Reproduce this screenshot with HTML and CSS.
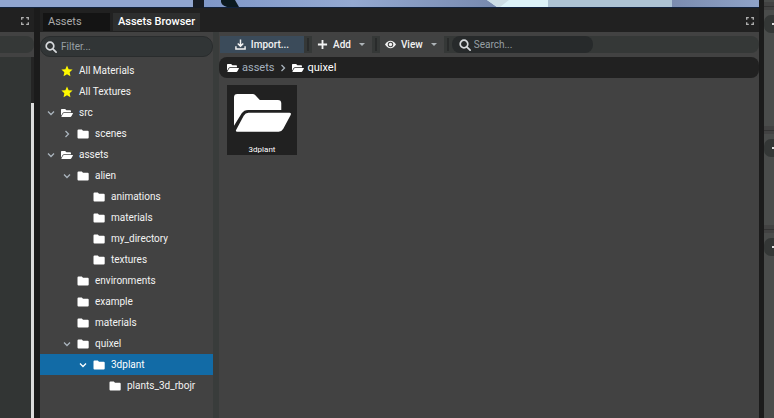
FILE: index.html
```
<!DOCTYPE html>
<html lang="en">
<head>
<meta charset="utf-8">
<title>Assets Browser</title>
<link rel="stylesheet" href="styles.css">
</head>
<body>
<svg class="defs" aria-hidden="true">
  <symbol id="folder" viewBox="0 0 12 10"><path d="M1.500.5h3.300l1.200 1.300h4.700q1 0 1 1v5.700q0 1-1 1H1.500q-1 0-1-1v-7q0-1 1-1z"/></symbol>
  <symbol id="open" viewBox="0 0 170 114"><path d="M10 0h46q4 0 7 3l14 15h54q10 0 10 10v20H42q-12 0-19 10L0 95V10Q0 0 10 0z"/><path d="M43 56h122q7 0 4 7l-22 41q-5 9-14 9H10q-7 0-3-7l22-41q5-9 14-9z"/></symbol>
  <symbol id="star" viewBox="0 0 24 24"><path d="M12 1l3.300 7.300 7.900.9-5.900 5.300 1.600 7.900-6.900-4-6.900 4 1.600-7.900L.8 9.200l7.900-.9z"/></symbol>
  <symbol id="down" viewBox="0 0 8 8"><path class="line" d="M1 2.500l3 3 3-3"/></symbol>
  <symbol id="right" viewBox="0 0 8 8"><path class="line" d="M2.500 1l3 3-3 3"/></symbol>
  <symbol id="search" viewBox="0 0 12 12"><circle class="lens" cx="5" cy="5" r="3.800"/><path class="lens" d="M7.800 7.800l3.300 3.300"/></symbol>
  <symbol id="expand" viewBox="0 0 8 8"><path class="line" d="M.7 2.800V.7h2.100M5.200.7h2.100v2.100M7.300 5.200v2.100H5.200M2.800 7.300H.7V5.200"/></symbol>
</svg>
<div class="editor">
  <div class="workspace">
    <svg class="viewport" viewBox="0 0 759 8" preserveAspectRatio="none" aria-hidden="true">
      <defs>
        <linearGradient id="sky"><stop offset="0" stop-color="#8098c9"/><stop offset=".5" stop-color="#94a9d1"/><stop offset="1" stop-color="#7688ad"/></linearGradient>
        <linearGradient id="haze"><stop offset="0" stop-color="#7b8caf"/><stop offset="1" stop-color="#8fa3c8"/></linearGradient>
      </defs>
      <rect width="759" height="8" fill="#11233f"/>
      <rect width="193" height="7" fill="#91a6d0"/>
      <rect x="193" width="11" height="8" fill="#171c24"/>
      <rect x="204" width="298" height="7" fill="url(#sky)"/>
      <path d="M221 0h14l4 7h-12q-7-2-6-7z" fill="#0c1a20"/>
      <path d="M487 0h61v7h-51z" fill="#dcf2f8"/>
      <path d="M487 0h22l-9 7h-3z" fill="#ccdde5"/>
      <rect x="548" width="124" height="7" fill="#adc3d4"/>
      <rect x="672" width="87" height="7" fill="url(#haze)"/>
    </svg>
    <div class="docks">
      <aside class="left">
        <div class="dock-head"><button class="max" aria-label="Maximize"><svg><use href="#expand"/></svg></button></div>
        <div class="left-bar"></div>
        <div class="left-body"><span class="thumb"></span></div>
      </aside>
      <main class="browser">
        <div class="dock-head" role="tablist">
          <button class="tab inactive" role="tab">Assets</button>
          <button class="tab" role="tab" aria-selected="true">Assets Browser</button>
          <button class="max" aria-label="Maximize"><svg><use href="#expand"/></svg></button>
        </div>
        <div class="panes">
          <section class="tree-pane">
            <label class="field filter"><svg><use href="#search"/></svg><input type="text" aria-label="Filter" placeholder="Filter..."></label>
            <ul class="tree">
              <li class="l0"><i class="arrow"></i><svg class="ico star"><use href="#star"/></svg>All Materials</li>
              <li class="l0"><i class="arrow"></i><svg class="ico star"><use href="#star"/></svg>All Textures</li>
              <li class="l0"><svg class="arrow"><use href="#down"/></svg><svg class="ico"><use href="#open"/></svg>src</li>
              <li class="l1"><svg class="arrow"><use href="#right"/></svg><svg class="ico"><use href="#folder"/></svg>scenes</li>
              <li class="l0"><svg class="arrow"><use href="#down"/></svg><svg class="ico"><use href="#open"/></svg>assets</li>
              <li class="l1"><svg class="arrow"><use href="#down"/></svg><svg class="ico"><use href="#folder"/></svg>alien</li>
              <li class="l2"><i class="arrow"></i><svg class="ico"><use href="#folder"/></svg>animations</li>
              <li class="l2"><i class="arrow"></i><svg class="ico"><use href="#folder"/></svg>materials</li>
              <li class="l2"><i class="arrow"></i><svg class="ico"><use href="#folder"/></svg>my_directory</li>
              <li class="l2"><i class="arrow"></i><svg class="ico"><use href="#folder"/></svg>textures</li>
              <li class="l1"><i class="arrow"></i><svg class="ico"><use href="#folder"/></svg>environments</li>
              <li class="l1"><i class="arrow"></i><svg class="ico"><use href="#folder"/></svg>example</li>
              <li class="l1"><i class="arrow"></i><svg class="ico"><use href="#folder"/></svg>materials</li>
              <li class="l1"><svg class="arrow"><use href="#down"/></svg><svg class="ico"><use href="#folder"/></svg>quixel</li>
              <li class="l2 selected"><svg class="arrow"><use href="#down"/></svg><svg class="ico"><use href="#folder"/></svg>3dplant</li>
              <li class="l3"><i class="arrow"></i><svg class="ico"><use href="#folder"/></svg>plants_3d_rbojr</li>
            </ul>
          </section>
          <div class="splitter"></div>
          <section class="content">
            <div class="toolbar">
              <button class="tool import"><svg class="tool-ico" viewBox="0 0 12 12"><path class="stroke" d="M6 .5v7M3 5l3 3 3-3M1 8v3h10V8"/></svg>Import...</button>
              <span class="sep"></span>
              <button class="tool"><svg class="tool-ico" viewBox="0 0 12 12"><path class="stroke plus" d="M6 1v10M1 6h10"/></svg>Add<i class="caret"></i></button>
              <span class="sep"></span>
              <button class="tool"><svg class="tool-ico" viewBox="0 0 12 12"><path fill-rule="evenodd" d="M0 6q2.500-4 6-4t6 4q-2.500 4-6 4T0 6zm3 0a3 3 0 1 0 6 0 3 3 0 1 0-6 0z"/><circle cx="6" cy="6" r="1.800"/></svg>View<i class="caret"></i></button>
              <span class="sep"></span>
              <label class="field search"><svg><use href="#search"/></svg><input type="text" aria-label="Search" placeholder="Search..."></label>
            </div>
            <nav class="crumbs" aria-label="Path">
              <a href="#assets"><svg class="ico"><use href="#open"/></svg>assets</a>
              <svg class="arrow"><use href="#right"/></svg>
              <a href="#quixel" class="current"><svg class="ico"><use href="#open"/></svg>quixel</a>
            </nav>
            <div class="grid">
              <button class="card"><svg><use href="#open"/></svg><span>3dplant</span></button>
            </div>
          </section>
        </div>
      </main>
    </div>
  </div>
  <aside class="right">
    <div class="rule first"></div><div class="pill"></div><div class="block"></div>
    <div class="rule"></div><div class="pill"></div><div class="block short"></div>
    <div class="rule"></div><div class="pill"></div>
  </aside>
</div>
</body>
</html>
```

FILE: styles.css
```
* { box-sizing: border-box; }
body { margin: 0; background: #1b1b1b; color: #f3f3f3; font: 10px/12px Roboto, sans-serif; overflow: hidden; }
button, input { font: inherit; color: inherit; border: 0; padding: 0; background: none; }
svg { display: block; fill: currentColor; flex: none; }
.defs { position: absolute; width: 0; height: 0; }
.line { fill: none; stroke: currentColor; stroke-width: 1.300px; }
.lens { fill: none; stroke: currentColor; stroke-width: 1.700px; stroke-linecap: round; }

.editor { display: flex; gap: 5px; height: 100vh; }
.workspace { flex: 1; min-width: 0; display: flex; flex-direction: column; }
.viewport { width: 100%; height: 8px; }
.docks { flex: 1; min-height: 0; display: flex; gap: 6px; }

.dock-head { display: flex; align-items: flex-end; gap: 3px; height: 24px; flex: none; padding: 0 5px 1px 3px; background: #212121; }
.max { margin: 0 0 0 auto; padding-top: 3px; align-self: center; color: #b4b4b4; }
.max svg { width: 8px; height: 8px; }
.tab { height: 18px; padding: 0 5px; background: #2d2e2e; font-size: 11px; font-weight: 500; color: #fff; }
.tab.inactive { width: 67px; background: #141414; color: #aaa; text-align: left; font-weight: 400; }

.left { width: 34px; display: flex; flex-direction: column; background: #424242; }
.left-bar { height: 17px; margin: 4px 0; background: #353837; border-radius: 0 8px 8px 0; }
.left-body { flex: 1; display: flex; background: #323534; border-right: 3px solid #242424; }
.thumb { width: 3px; margin: 46px -3px 0 auto; background: #dcdcdc; }

.browser { flex: 1; min-width: 0; display: flex; flex-direction: column; background: #424242; }
.panes { flex: 1; min-height: 0; display: flex; }
.tree-pane { width: 173px; padding-top: 4px; }
.splitter { width: 6px; background: #393c3b; }
.content { flex: 1; min-width: 0; padding-top: 4px; }

.field { display: flex; align-items: center; gap: 4px; padding: 0 4px; color: #d6d9dc; }
.field svg { width: 12px; height: 12px; }
.field input { flex: 1; min-width: 0; outline: 0; }
.field input::placeholder { color: #98a0a5; opacity: 1; }
.filter { height: 21px; border-radius: 10px; background: #313536; border: 1px solid #292c2d; }
.search { width: 141px; height: 17px; border-radius: 8px; background: #272a2b; padding: 0 7px; gap: 3px; }

.tree { list-style: none; margin: 3px 0 0; padding: 0; }
.tree li { display: flex; align-items: center; height: 21px; padding-left: 7px; white-space: nowrap; }
.tree .l1 { padding-left: 23px; }
.tree .l2 { padding-left: 39px; }
.tree .l3 { padding-left: 55px; }
.arrow { width: 8px; height: 8px; color: #aab4bd; }
.ico { width: 12px; height: 10px; color: #fff; }
.tree .ico { margin: 0 6px; }
.tree .star { height: 12px; color: #fff900; }
.tree .selected { background: #126ba6; color: #fff; }
.selected .arrow { color: #fff; }

.toolbar { display: flex; align-items: center; height: 17px; margin-left: 1px; background: #353837; border-radius: 0 8px 8px 0; }
.tool { display: flex; align-items: center; justify-content: center; gap: 5px; height: 17px; padding: 0 5px; background: #414242; font-weight: 500; white-space: nowrap; }
.import { width: 84px; background: #3b4b5a; }
.tool-ico { width: 11px; height: 11px; }
.stroke { fill: none; stroke: currentColor; stroke-width: 1.600px; }
.plus { stroke-width: 2px; }
.caret { margin: 0 2px 0 3px; border: 3px solid transparent; border-top-color: #aeb4b8; border-bottom-width: 0; }
.sep { width: 2px; height: 13px; margin: 0 3px; background: #292b2b; }

.crumbs { display: flex; align-items: center; gap: 5px; height: 21px; margin-top: 4px; padding: 0 8px; border-radius: 8px; background: #212121; font-size: 11px; }
.crumbs a { display: flex; align-items: center; gap: 3px; color: #a5b1bf; text-decoration: none; }
.crumbs .current { color: #fff; }
.grid { display: flex; flex-wrap: wrap; gap: 8px; padding: 7px 8px; }
.card { width: 70px; height: 70px; display: flex; flex-direction: column; align-items: center; justify-content: space-between; background: #212121; font-size: 8px; line-height: 10px; color: #fff; }
.card svg { width: 57px; height: 56px; }

.right { width: 10px; background: #4a4c4b; overflow: hidden; }
.rule { height: 8px; border: solid #424242; border-width: 4px 0 3px; background: #323232; }
.rule.first { margin-top: 2px; }
.pill { height: 18px; margin-top: 5px; border-radius: 7px 0 0 7px; background: #343736; display: flex; align-items: center; justify-content: flex-end; }
.pill::after { content: ""; width: 2px; height: 2px; background: #ddd; }
.block { height: 93px; }
.block.short { height: 68px; }
```
